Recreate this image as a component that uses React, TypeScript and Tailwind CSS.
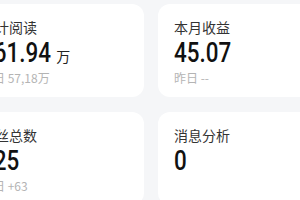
import React from 'react';

interface StatCardProps {
  title: string;
  value: string;
  unit?: string;
  sub?: string;
}

const StatCard: React.FC<StatCardProps> = ({ title, value, unit, sub }) => {
  return (
    <div className="h-[93px] rounded-xl bg-white pl-4 pt-[13px]">
      <p className="text-[14px] leading-5 text-[#333333]">{title}</p>
      <div className="mt-[2px] flex h-[28px] items-baseline">
        <span className="inline-block origin-left scale-x-[0.8] font-['Roboto',sans-serif] text-[28px] font-medium leading-none text-[#111111]">
          {value}
        </span>
        {unit && (
          <span className="ml-[-12px] text-[14px] leading-none text-[#222222]">{unit}</span>
        )}
      </div>
      {sub && <p className="mt-[3px] text-[12px] leading-4 text-[#b4b4b4]">{sub}</p>}
    </div>
  );
};

const stats: StatCardProps[] = [
  { title: '累计阅读', value: '161.94', unit: '万', sub: '昨日 57,18万' },
  { title: '本月收益', value: '45.07', sub: '昨日 --' },
  { title: '粉丝总数', value: '125', sub: '昨日 +63' },
  { title: '消息分析', value: '0' },
];

export default function App() {
  return (
    <div className="h-[200px] w-[300px] overflow-hidden bg-[#f5f6f8] font-['Noto_Sans_CJK_SC',sans-serif]">
      <div className="ml-[-35px] grid w-[372px] grid-cols-[179px_179px] gap-x-[14px] gap-y-[15px] pt-1">
        {stats.map((s) => (
          <StatCard key={s.title} {...s} />
        ))}
      </div>
    </div>
  );
}
